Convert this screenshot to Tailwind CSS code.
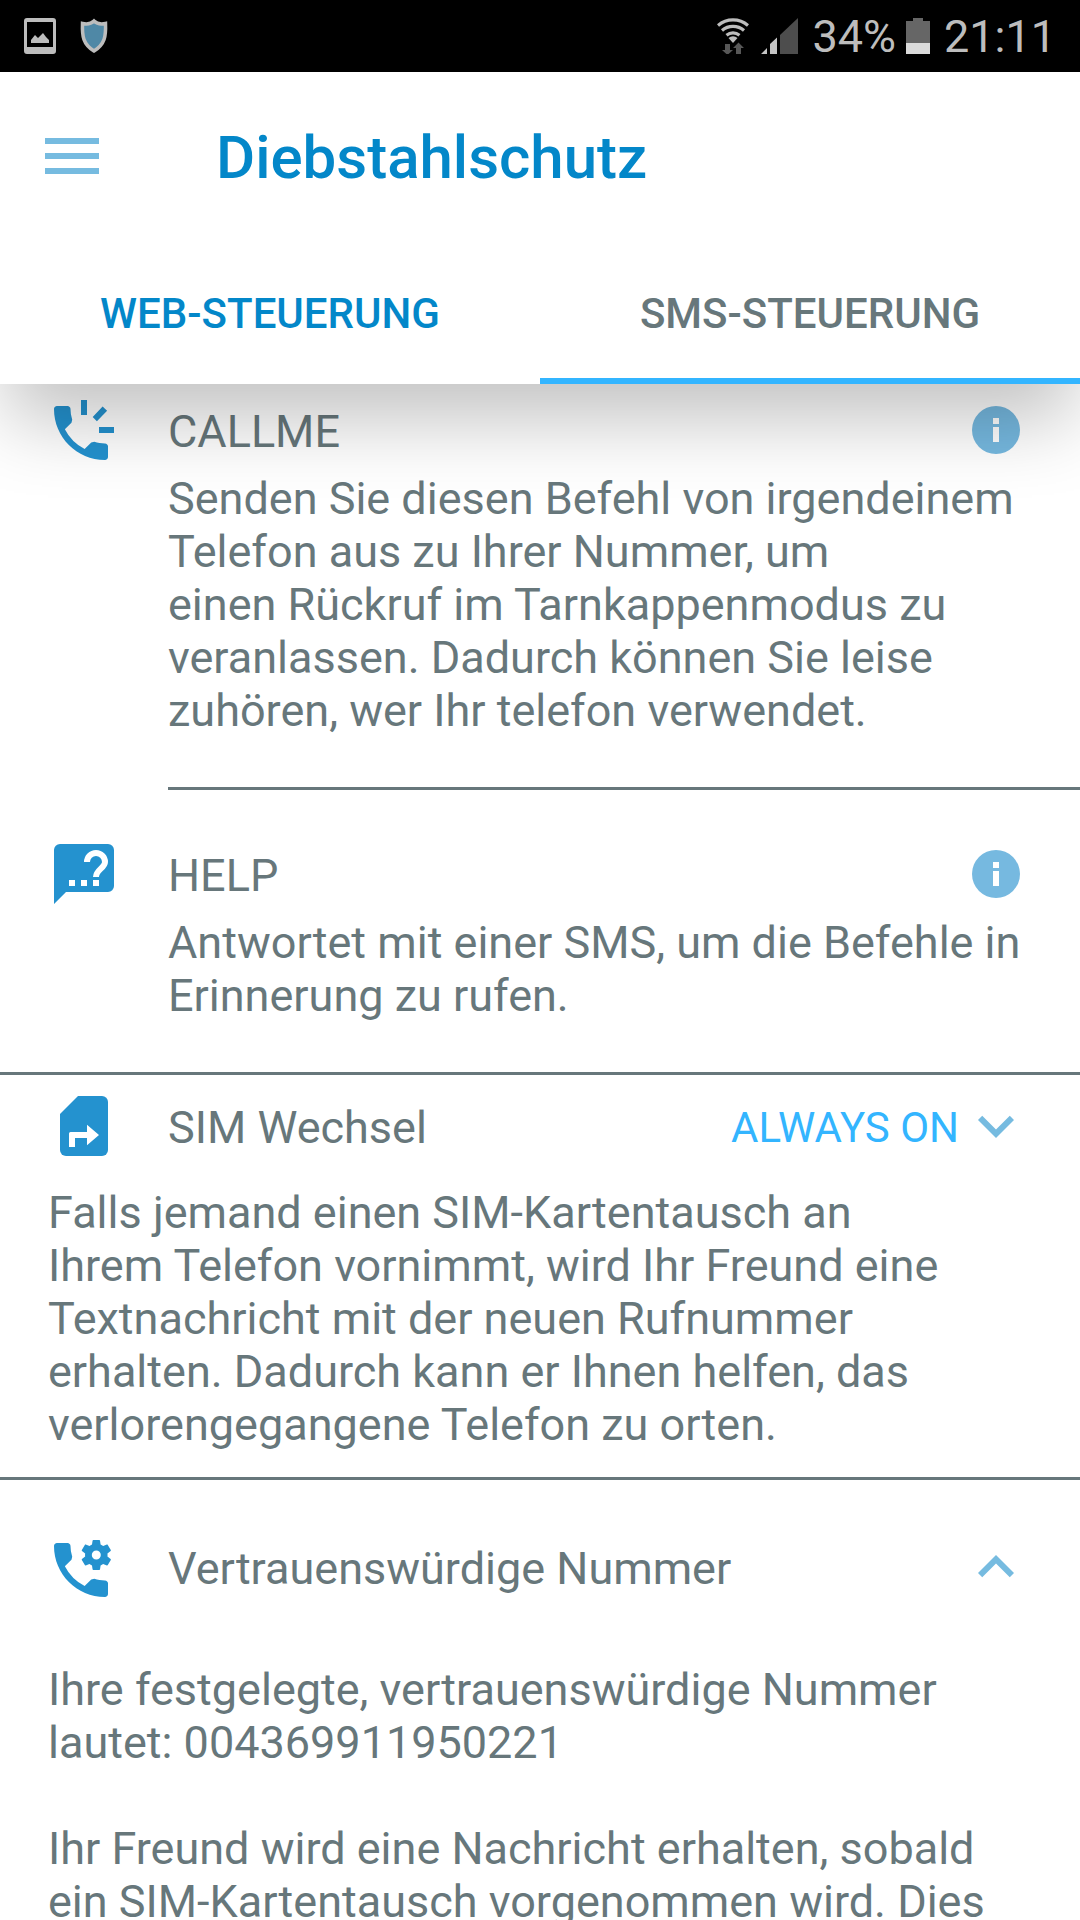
<!DOCTYPE html>
<html lang="de">
  <head>
    <meta charset="UTF-8" />
    <meta name="viewport" content="width=device-width, initial-scale=1.0" />
    <title>Diebstahlschutz</title>
    <script src="https://cdn.jsdelivr.net/npm/@tailwindcss/browser@4"></script>
  </head>
  <body class="bg-white font-[Roboto,sans-serif] text-[#67777b]">
    <div class="flex h-screen flex-col overflow-hidden">
      <!-- status bar -->
      <div class="z-20 flex h-[72px] shrink-0 items-center justify-between bg-black px-6 text-[45px] leading-[72px] text-[#bdbdbd]">
        <div class="flex items-center gap-6">
          <svg class="h-9 w-8" viewBox="0 0 32 36" fill="currentColor" aria-hidden="true">
            <path fill-rule="evenodd" d="M3 0h26a3 3 0 0 1 3 3v30a3 3 0 0 1-3 3H3a3 3 0 0 1-3-3V3a3 3 0 0 1 3-3zm0 4v25h26V4z" />
            <path d="M7 25v-3l4-5 3 3 5-5 3 4 3 3v3z" />
          </svg>
          <svg class="h-9 w-7" viewBox="0 0 28 36" aria-hidden="true">
            <path d="M14 3c3 3 7 3.500 11.500 2.500C26 18 25 26 14 33 3 26 2 18 2.500 5.500 7 6.500 11 6 14 3z" fill="#4f88a6" stroke="#bdbdbd" stroke-width="3.500" />
          </svg>
        </div>
        <div class="flex items-center">
          <svg class="mr-3 h-9 w-8" viewBox="0 0 32 36" fill="none" aria-hidden="true">
            <g stroke="#bdbdbd" stroke-width="3.200">
              <path d="M1 7.500a23 23 0 0 1 30 0" />
              <path d="M5 12.500a17 17 0 0 1 22 0" />
              <path d="M9.500 17.200a10.500 10.500 0 0 1 13 0" />
            </g>
            <path d="M16 25l-4.500-5a7 7 0 0 1 9 0z" fill="#bdbdbd" />
            <path d="M8 26h5v6h3l-5.500 5L5 32h3zM19 36v-6h-3l5.500-5.500L27 30h-3v6z" fill="#575757" />
          </svg>
          <svg class="mr-3.5 h-9 w-[37px]" viewBox="0 0 37 36" aria-hidden="true">
            <path d="M0 36l6-6v6zM9 36V26l7-6.500V36z" fill="#c4c4c4" />
            <path d="M19 36V17L37 0v36z" fill="#4d4d4d" />
          </svg>
          <span class="pt-0.5">34%</span>
          <svg class="ml-2.5 mr-3.5 h-9 w-6" viewBox="0 0 24 36" aria-hidden="true">
            <path d="M0 3h7V0h10v3h7v22H0z" fill="#666" />
            <path d="M0 25h24v11H0z" fill="#dadada" />
          </svg>
          <span class="pt-0.5">21:11</span>
        </div>
      </div>

      <!-- toolbar + tabs -->
      <header class="z-10 shrink-0 bg-white shadow-[0_42px_72px_-6px_rgba(0,0,0,0.24)]">
        <div class="flex h-[168px] items-center pl-[45px]">
          <button class="text-[#76bbe0]" aria-label="Menü">
            <svg class="h-9 w-[54px]" viewBox="0 0 54 36" fill="currentColor" aria-hidden="true">
              <path d="M0 0h54v6H0zM0 15h54v6H0zM0 30h54v6H0z" />
            </svg>
          </button>
          <h1 class="ml-[117px] pt-1 text-[60px] font-medium text-[#0387c9]">Diebstahlschutz</h1>
        </div>
        <div class="grid h-36 grid-cols-2 text-[42px] font-medium" role="tablist">
          <button class="border-b-6 border-transparent pt-2 text-[#0387c9]" role="tab" aria-selected="false">WEB-STEUERUNG</button>
          <button class="border-b-6 border-[#33b5ff] pt-2" role="tab" aria-selected="true">SMS-STEUERUNG</button>
        </div>
      </header>

      <!-- commands -->
      <main class="min-h-0 flex-1 overflow-hidden text-[45px] leading-[53px]">
        <section class="pt-2.5">
          <div class="flex h-[72px] items-center pl-12 pr-[60px]">
            <svg class="mr-12 size-[72px] shrink-0 text-[#2492cf]" viewBox="1 -1 24 24" fill="currentColor" aria-hidden="true">
              <path d="M20 15.500c-1.250 0-2.450-.2-3.570-.57l-1.020.24-2.200 2.200a15.050 15.050 0 0 1-6.590-6.580l2.200-2.210.25-1.010A11.360 11.360 0 0 1 8.500 4c0-.55-.45-1-1-1H4c-.55 0-1 .45-1 1 0 9.390 7.610 17 17 17 .55 0 1-.45 1-1v-3.500c0-.55-.45-1-1-1z" />
              <path d="M12 1h2v5h-2zM18 10h5v2h-5zM15.900 6.700l3.300-3.500 1.500 1.400-3.400 3.500z" />
            </svg>
            <h2 class="flex-1 pt-0.5">CALLME</h2>
            <button class="text-[#76b9e0]" aria-label="Info zu CALLME">
              <svg class="size-12" viewBox="0 0 16 16" aria-hidden="true">
                <circle cx="8" cy="8" r="8" fill="currentColor" />
                <path d="M7 4h2v2H7zM7 7h2v5H7z" fill="#fff" />
              </svg>
            </button>
          </div>
          <p class="mt-1.5 ml-[168px] pb-[50px]">
            Senden Sie diesen Befehl von irgendeinem<br />
            Telefon aus zu Ihrer Nummer, um<br />
            einen Rückruf im Tarnkappenmodus zu<br />
            veranlassen. Dadurch können Sie leise<br />
            zuhören, wer Ihr telefon verwendet.
          </p>
        </section>

        <hr class="ml-[168px] border-t-3 border-[#67777b]" />

        <section class="pt-12">
          <div class="flex h-[72px] items-center pl-12 pr-[60px]">
            <svg class="mr-12 size-[72px] shrink-0 text-[#2492cf]" viewBox="0 0 24 24" aria-hidden="true">
              <path d="M4 2h16a2 2 0 0 1 2 2v12a2 2 0 0 1-2 2H6l-4 4V4a2 2 0 0 1 2-2z" fill="currentColor" />
              <path d="M7 14h2v2H7zM11 14h2v2h-2zM15 14h2v2h-2z" fill="#fff" />
              <path d="M13 8a3 3 0 0 1 6 0c0 2-3 2.500-3 5" fill="none" stroke="#fff" stroke-width="2" />
            </svg>
            <h2 class="flex-1 pt-0.5">HELP</h2>
            <button class="text-[#76b9e0]" aria-label="Info zu HELP">
              <svg class="size-12" viewBox="0 0 16 16" aria-hidden="true">
                <circle cx="8" cy="8" r="8" fill="currentColor" />
                <path d="M7 4h2v2H7zM7 7h2v5H7z" fill="#fff" />
              </svg>
            </button>
          </div>
          <p class="mt-1.5 ml-[168px] pb-[50px]">
            Antwortet mit einer SMS, um die Befehle in<br />
            Erinnerung zu rufen.
          </p>
        </section>

        <hr class="border-t-3 border-[#67777b]" />

        <section class="pt-[15px]">
          <div class="flex h-[72px] items-center px-12">
            <svg class="mr-12 size-[72px] shrink-0 text-[#2492cf]" viewBox="0 0 24 24" aria-hidden="true">
              <path d="M10 2h8a2 2 0 0 1 2 2v16a2 2 0 0 1-2 2H6a2 2 0 0 1-2-2V8z" fill="currentColor" />
              <path d="M7 19v-4.500a.5.500 0 0 1 .5-.5H13v-2.400l4 3.400-4 3.400V16H9v3z" fill="#fff" />
            </svg>
            <h2 class="flex-1 pt-0.5">SIM Wechsel</h2>
            <label class="flex items-center text-[42px] text-[#33b5ff]">
              <select class="appearance-none pt-0.5" aria-label="SIM Wechsel">
                <option>ALWAYS ON</option>
              </select>
              <svg class="size-[72px] text-[#76bbe0]" viewBox="0 0 24 24" fill="currentColor" aria-hidden="true">
                <path d="M7.410 8.590L12 13.170l4.590-4.580L18 10l-6 6-6-6z" />
              </svg>
            </label>
          </div>
          <p class="mt-6 px-12 pb-[26px]">
            Falls jemand einen SIM-Kartentausch an<br />
            Ihrem Telefon vornimmt, wird Ihr Freund eine<br />
            Textnachricht mit der neuen Rufnummer<br />
            erhalten. Dadurch kann er Ihnen helfen, das<br />
            verlorengegangene Telefon zu orten.
          </p>
        </section>

        <hr class="border-t-3 border-[#67777b]" />

        <section class="pt-[51px]">
          <div class="flex h-[72px] items-center px-12">
            <svg class="mr-12 size-[72px] shrink-0 text-[#2492cf]" viewBox="1 -1 24 24" fill="currentColor" aria-hidden="true">
              <path d="M20 15.500c-1.250 0-2.450-.2-3.570-.57l-1.020.24-2.200 2.200a15.050 15.050 0 0 1-6.590-6.580l2.200-2.210.25-1.010A11.360 11.360 0 0 1 8.500 4c0-.55-.45-1-1-1H4c-.55 0-1 .45-1 1 0 9.390 7.610 17 17 17 .55 0 1-.45 1-1v-3.500c0-.55-.45-1-1-1z" />
              <path
                transform="translate(11.100 1) scale(.5)"
                d="M19.430 12.980c.04-.32.07-.64.07-.98s-.03-.66-.07-.98l2.110-1.650c.19-.15.24-.42.12-.64l-2-3.460c-.12-.22-.39-.3-.61-.22l-2.490 1c-.52-.4-1.080-.73-1.690-.98l-.38-2.650C14.460 2.180 14.250 2 14 2h-4c-.25 0-.46.18-.49.42l-.38 2.650c-.61.25-1.170.59-1.690.98l-2.490-1c-.23-.09-.49 0-.61.22l-2 3.460c-.13.22-.07.49.12.64l2.110 1.650c-.04.32-.07.65-.07.98s.03.66.07.98l-2.110 1.650c-.19.15-.24.42-.12.64l2 3.460c.12.22.39.3.61.22l2.490-1c.52.4 1.080.73 1.690.98l.38 2.650c.03.24.24.42.49.42h4c.25 0 .46-.18.49-.42l.38-2.650c.61-.25 1.170-.59 1.690-.98l2.490 1c.23.09.49 0 .61-.22l2-3.460c.12-.22.07-.49-.12-.64zM12 15a3 3 0 1 1 0-6 3 3 0 0 1 0 6z"
              />
            </svg>
            <h2 class="flex-1 pt-0.5">Vertrauenswürdige Nummer</h2>
            <button class="text-[#76bbe0]" aria-label="Einklappen">
              <svg class="size-[72px]" viewBox="0 0 24 24" fill="currentColor" aria-hidden="true">
                <path d="M12 8l-6 6 1.410 1.410L12 10.830l4.590 4.580L18 14z" />
              </svg>
            </button>
          </div>
          <div class="mt-[60px] space-y-[53px] px-12">
            <p>
              Ihre festgelegte, vertrauenswürdige Nummer<br />
              lautet: 004369911950221
            </p>
            <p>
              Ihr Freund wird eine Nachricht erhalten, sobald<br />
              ein SIM-Kartentausch vorgenommen wird. Dies
            </p>
          </div>
        </section>
      </main>
    </div>
  </body>
</html>
